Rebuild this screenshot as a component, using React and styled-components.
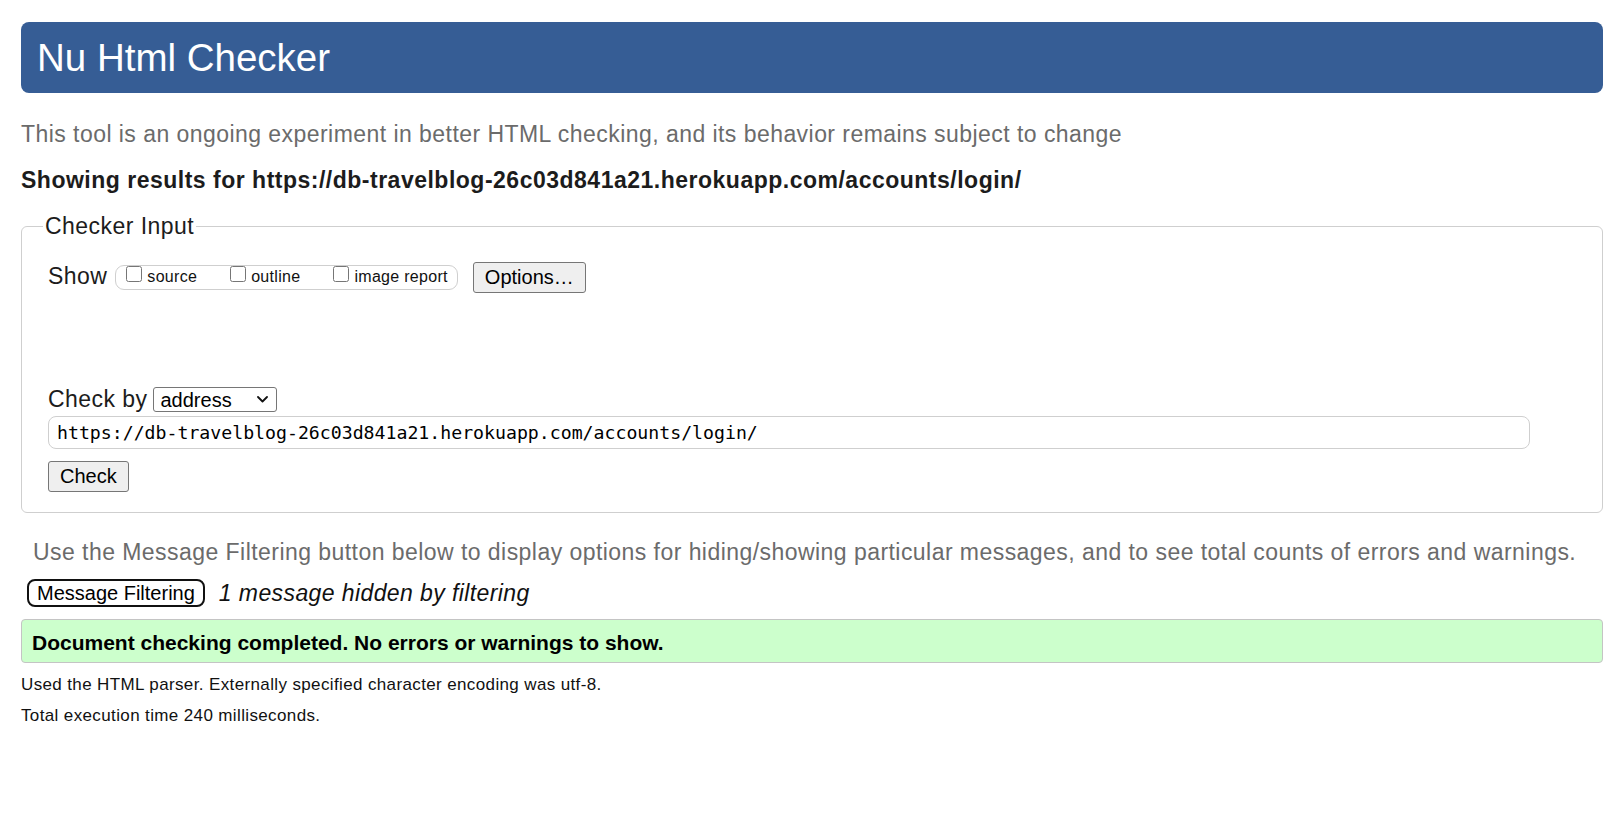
import React from "react";
import styled, { createGlobalStyle } from "styled-components";

const Global = createGlobalStyle`
  html, body { margin: 0; padding: 0; background: #fff; }
  body { font-family: "Liberation Sans", Arial, sans-serif; color: #111; }
`;

const Page = styled.main`
  padding: 22px 15px 40px 21px;
`;

const Header = styled.h1`
  margin: 0;
  height: 71px;
  padding-left: 16px;
  background: #365d95;
  color: #fff;
  border-radius: 8px;
  font-weight: normal;
  font-size: 38.5px;
  line-height: 71px;
`;

const Intro = styled.p`
  margin: 26px 0 0;
  font-size: 23px;
  letter-spacing: 0.45px;
  line-height: 30px;
  color: #6b6b6b;
`;

const Showing = styled.p`
  margin: 16px 0 0;
  font-size: 23px;
  letter-spacing: 0.5px;
  font-weight: bold;
  line-height: 30px;
  color: #1c1c1c;
`;

const Fieldset = styled.fieldset`
  margin: 16px 0 0;
  border: 1px solid #cfcfcf;
  border-radius: 6px;
  padding: 21px 26px 20px 26px;
  min-inline-size: 0;
`;

const Legend = styled.legend`
  padding: 0 2px;
  margin-left: -5px;
  font-size: 23px;
  letter-spacing: 0.45px;
  line-height: 30px;
  color: #1c1c1c;
`;

const Row = styled.div`
  display: flex;
  align-items: center;
  height: ${(p) => p.$h}px;
  margin-top: ${(p) => p.$mt || 0}px;
`;

const RowLabel = styled.span`
  font-size: 23px;
  letter-spacing: 0.45px;
  line-height: ${(p) => p.$lh}px;
  align-self: ${(p) => p.$self || "center"};
  margin-right: ${(p) => p.$mr}px;
  color: #1c1c1c;
`;

const Pill = styled.span`
  display: inline-block;
  border: 1px solid #cfcfcf;
  border-radius: 9px;
  padding: 0 9px 3px 6px;
  font-size: 16px;
  letter-spacing: 0.3px;
  white-space: nowrap;
  margin-right: 15px;
`;

const CheckLabel = styled.label`
  display: inline-block;
  color: #111;
  & + & { margin-left: 29px; }
`;

const Box = styled.input`
  width: 16px;
  height: 16px;
  margin: 0 5px 3px 4px;
  vertical-align: baseline;
`;

const Button = styled.button`
  font-family: "Liberation Sans", Arial, sans-serif;
  font-size: 20px;
  height: ${(p) => p.$h}px;
  padding: 0 ${(p) => p.$px}px;
  background: #efefef;
  color: #000;
  border: 1px solid #767676;
  border-radius: 3px;
`;

const SelectWrap = styled.span`
  position: relative;
  display: inline-block;
  width: 124px;
  height: 25px;
  margin-left: 1px;
`;

const Select = styled.select`
  appearance: none;
  -webkit-appearance: none;
  box-sizing: border-box;
  font-family: "Liberation Sans", Arial, sans-serif;
  font-size: 20px;
  width: 124px;
  height: 25px;
  padding: 0 24px 0 6px;
  border: 1px solid #767676;
  border-radius: 3px;
  background: #fff;
  color: #000;
`;

const Chevron = styled.svg`
  position: absolute;
  right: 9px;
  top: 9px;
  width: 11px;
  height: 7px;
  pointer-events: none;
`;

const UrlInput = styled.input`
  display: block;
  box-sizing: border-box;
  width: calc(100% - 46px);
  height: 33px;
  margin-top: 4px;
  padding: 0 8px;
  border: 1px solid #cfcfcf;
  border-radius: 8px;
  font-family: "DejaVu Sans Mono", "Liberation Mono", monospace;
  font-size: 18.2px;
  color: #000;
`;

const CheckRow = styled.div`
  margin-top: 12px;
  display: flex;
`;

const FilterNote = styled.p`
  margin: 24px 0 0 12px;
  font-size: 23px;
  letter-spacing: 0.45px;
  line-height: 30px;
  color: #6b6b6b;
`;

const FilterRow = styled.div`
  display: flex;
  align-items: center;
  height: 28px;
  margin: 12px 0 0 6px;
`;

const FilterButton = styled.button`
  font-family: "Liberation Sans", Arial, sans-serif;
  font-size: 20px;
  height: 28px;
  padding: 0 8px;
  background: #fff;
  color: #000;
  border: 2px solid #111;
  border-radius: 8px;
  margin-right: 14px;
`;

const Hidden = styled.span`
  font-size: 23px;
  letter-spacing: 0.4px;
  font-style: italic;
  line-height: 28px;
  color: #111;
`;

const Success = styled.div`
  margin-top: 12px;
  padding: 4px 10px 0;
  height: 38px;
  line-height: 38px;
  background: #ccffcc;
  border: 1px solid #c4c4c4;
  border-radius: 4px;
  font-size: 21px;
  font-weight: bold;
  color: #000;
`;

const Details = styled.div`
  margin-top: 6px;
`;

const Detail = styled.p`
  margin: 0;
  font-size: 17px;
  letter-spacing: 0.37px;
  line-height: 31px;
  color: #111;
`;

const url = "https://db-travelblog-26c03d841a21.herokuapp.com/accounts/login/";

export default function App() {
  return (
    <>
      <Global />
      <Page>
        <Header>Nu Html Checker</Header>
        <Intro>
          This tool is an ongoing experiment in better HTML checking, and its behavior remains subject to change
        </Intro>
        <Showing>Showing results for {url}</Showing>
        <Fieldset>
          <Legend>Checker Input</Legend>
          <Row $h={31}>
            <RowLabel $lh={29} $self="flex-start" $mr={8}>Show</RowLabel>
            <Pill>
              <CheckLabel><Box type="checkbox" />source</CheckLabel>
              <CheckLabel><Box type="checkbox" />outline</CheckLabel>
              <CheckLabel><Box type="checkbox" />image report</CheckLabel>
            </Pill>
            <Button type="button" $h={31} $px={11}>Options…</Button>
          </Row>
          <Row $h={25} $mt={94}>
            <RowLabel $lh={25} $mr={5}>Check by</RowLabel>
            <SelectWrap>
              <Select defaultValue="address">
                <option value="address">address</option>
                <option value="file">file upload</option>
                <option value="text">text input</option>
              </Select>
              <Chevron viewBox="0 0 11 7" aria-hidden="true">
                <path d="M1 1 L5.5 5.5 L10 1" fill="none" stroke="#111" strokeWidth="1.8" strokeLinecap="round" strokeLinejoin="round" />
              </Chevron>
            </SelectWrap>
          </Row>
          <UrlInput type="url" defaultValue={url} />
          <CheckRow>
            <Button type="button" $h={31} $px={11}>Check</Button>
          </CheckRow>
        </Fieldset>
        <FilterNote>
          Use the Message Filtering button below to display options for hiding/showing particular messages, and to see total counts of errors and warnings.
        </FilterNote>
        <FilterRow>
          <FilterButton type="button">Message Filtering</FilterButton>
          <Hidden>1 message hidden by filtering</Hidden>
        </FilterRow>
        <Success>Document checking completed. No errors or warnings to show.</Success>
        <Details>
          <Detail>Used the HTML parser. Externally specified character encoding was utf-8.</Detail>
          <Detail>Total execution time 240 milliseconds.</Detail>
        </Details>
      </Page>
    </>
  );
}
